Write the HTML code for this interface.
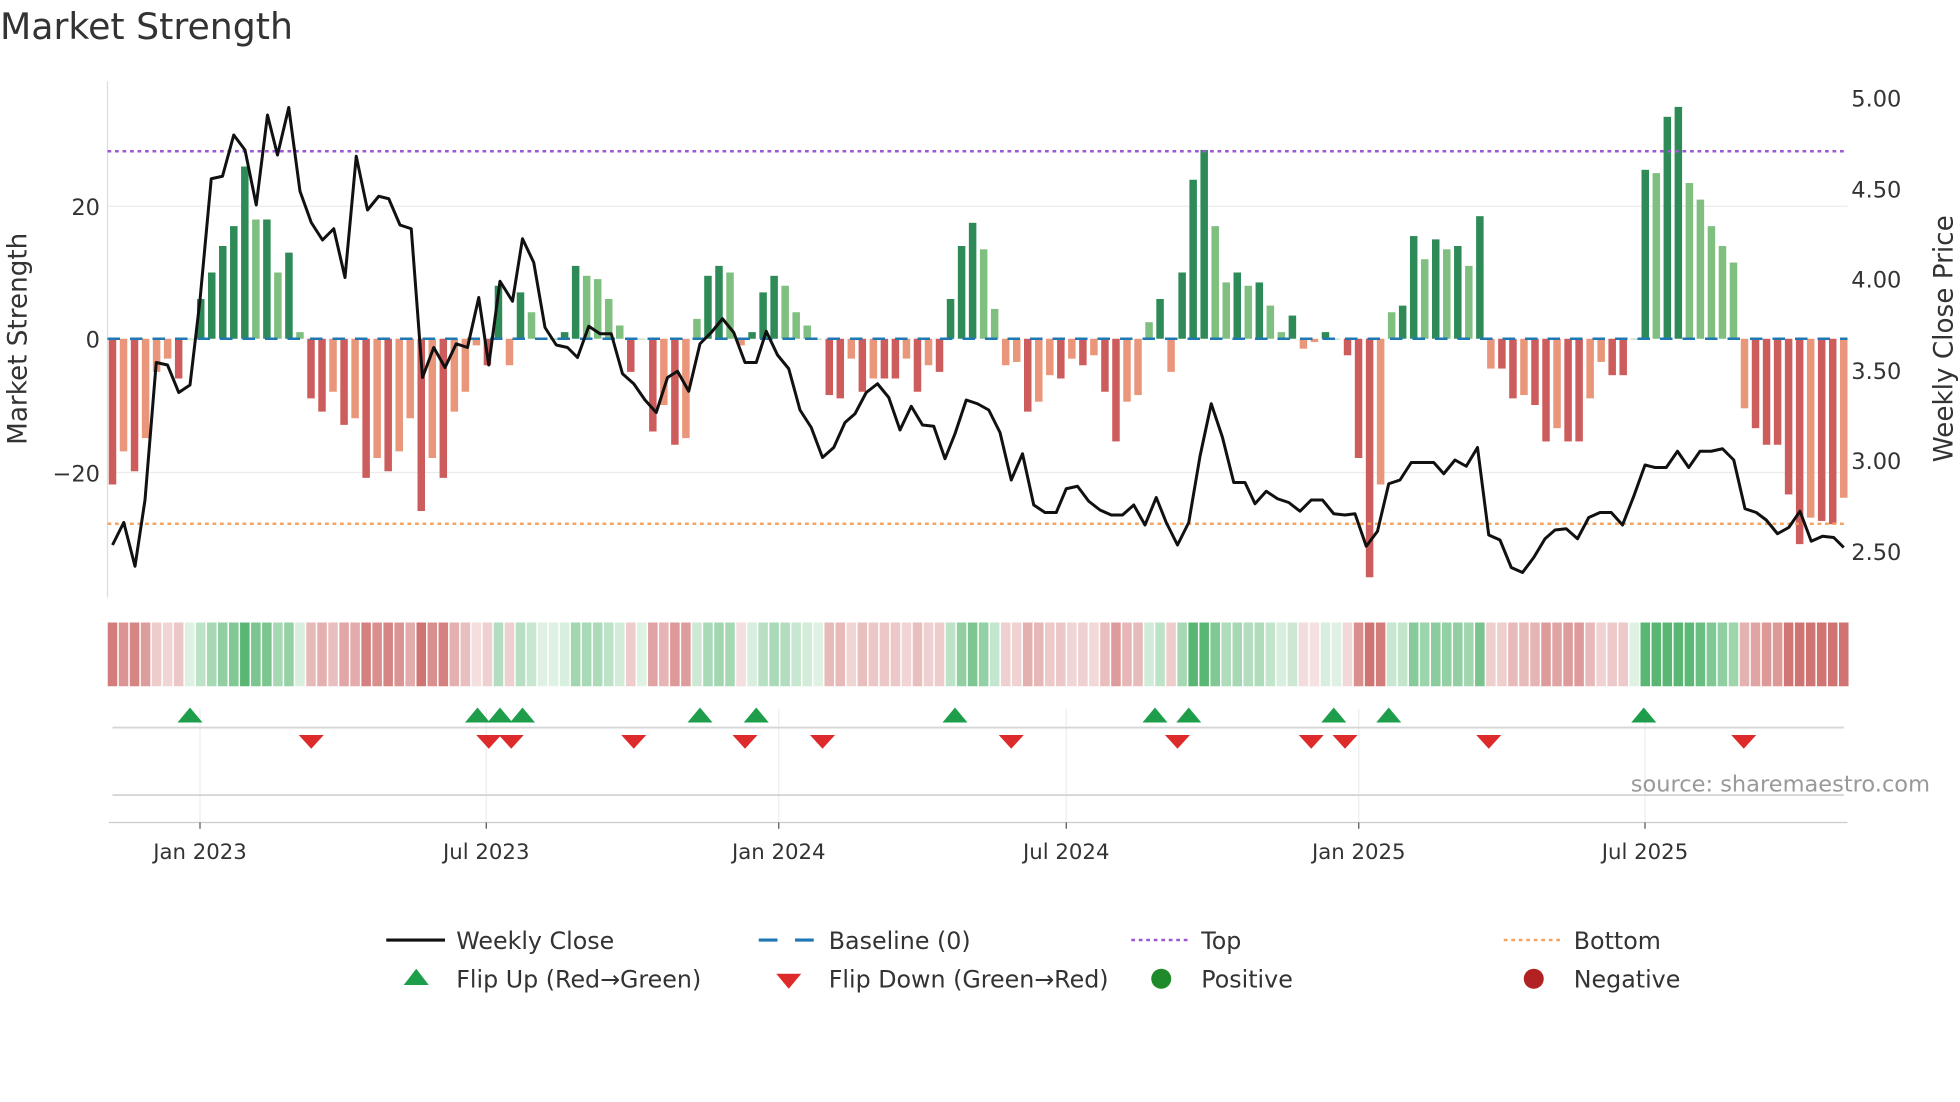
<!DOCTYPE html>
<html><head><meta charset="utf-8">
<style>
html,body{margin:0;padding:0;background:#fff;}
svg{display:block;font-family:"DejaVu Sans","Liberation Sans",sans-serif;}
</style></head>
<body>
<svg id="c" width="1960" height="1102" viewBox="0 0 1568 881.6" xmlns="http://www.w3.org/2000/svg">
<rect width="1568" height="882" fill="#fff"/>
<text x="0" y="31" font-size="29" fill="#333">Market Strength</text>
<g stroke="#ececec" stroke-width="1">
<line x1="86" y1="165" x2="1478" y2="165"/>
<line x1="86" y1="378" x2="1478" y2="378"/>
</g>
<line x1="86" y1="65" x2="86" y2="478" stroke="#ddd"/>
<g id="bars"></g>
<line x1="86" y1="271" x2="1478" y2="271" stroke="#1f77b4" stroke-width="2" stroke-dasharray="10,8"/>
<line x1="86" y1="121" x2="1478" y2="121" stroke="#9b59d6" stroke-width="2" stroke-dasharray="3,3"/>
<line x1="86" y1="419" x2="1478" y2="419" stroke="#f4a460" stroke-width="2" stroke-dasharray="3,3"/>
<polyline id="price" fill="none" stroke="#111" stroke-width="2.4" stroke-linejoin="round"/>
<g font-size="18" fill="#333" text-anchor="end">
<text x="80" y="172">20</text><text x="80" y="278">0</text><text x="80" y="385">−20</text>
</g>
<text transform="translate(21,271) rotate(-90)" font-size="21" fill="#333" text-anchor="middle">Market Strength</text>
<g font-size="18" fill="#333">
<text x="1481" y="85">5.00</text><text x="1481" y="158">4.50</text><text x="1481" y="230">4.00</text>
<text x="1481" y="303">3.50</text><text x="1481" y="375">3.00</text><text x="1481" y="448">2.50</text>
</g>
<text transform="translate(1562,271) rotate(-90)" font-size="21" fill="#333" text-anchor="middle">Weekly Close Price</text>
<g id="heat"></g>
<g stroke="#eee"><line x1="160" y1="567" x2="160" y2="658"/><line x1="389" y1="567" x2="389" y2="658"/><line x1="623" y1="567" x2="623" y2="658"/><line x1="853" y1="567" x2="853" y2="658"/><line x1="1087" y1="567" x2="1087" y2="658"/><line x1="1316" y1="567" x2="1316" y2="658"/></g>
<line x1="90" y1="582" x2="1475" y2="582" stroke="#d6d6d6" stroke-width="1.5"/>
<line x1="90" y1="636" x2="1475" y2="636" stroke="#d6d6d6" stroke-width="1.5"/>
<line x1="87" y1="658" x2="1478" y2="658" stroke="#ccc"/>
<g id="marks"></g>
<text x="1544" y="633" font-size="18" fill="#999" text-anchor="end">source: sharemaestro.com</text>
<g stroke="#555"><line x1="160" y1="658" x2="160" y2="663"/><line x1="389" y1="658" x2="389" y2="663"/><line x1="623" y1="658" x2="623" y2="663"/><line x1="853" y1="658" x2="853" y2="663"/><line x1="1087" y1="658" x2="1087" y2="663"/><line x1="1316" y1="658" x2="1316" y2="663"/></g>
<g font-size="17" fill="#333" text-anchor="middle">
<text x="160" y="687">Jan 2023</text><text x="389" y="687">Jul 2023</text><text x="623" y="687">Jan 2024</text>
<text x="853" y="687">Jul 2024</text><text x="1087" y="687">Jan 2025</text><text x="1316" y="687">Jul 2025</text>
</g>
<g font-size="19" fill="#333">
<line x1="309" y1="752" x2="356" y2="752" stroke="#111" stroke-width="2.5"/>
<text x="365" y="759">Weekly Close</text>
<line x1="607" y1="752" x2="622" y2="752" stroke="#1f77b4" stroke-width="2.5"/>
<line x1="636" y1="752" x2="651" y2="752" stroke="#1f77b4" stroke-width="2.5"/>
<text x="663" y="759">Baseline (0)</text>
<line x1="905" y1="752" x2="950" y2="752" stroke="#9b59d6" stroke-width="2" stroke-dasharray="3,3"/>
<text x="961" y="759">Top</text>
<line x1="1203" y1="752" x2="1248" y2="752" stroke="#f4a460" stroke-width="2" stroke-dasharray="3,3"/>
<text x="1259" y="759">Bottom</text>
<polygon points="323,788 333,775 343,788" fill="#1e9e4a"/>
<text x="365" y="790">Flip Up (Red→Green)</text>
<polygon points="621,779 641,779 631,791" fill="#dd2a2a"/>
<text x="663" y="790">Flip Down (Green→Red)</text>
<circle cx="929" cy="783" r="8" fill="#1f8a2a"/>
<text x="961" y="790">Positive</text>
<circle cx="1227" cy="783" r="8" fill="#b22222"/>
<text x="1259" y="790">Negative</text>
</g>
</svg>
<script>
var NS="http://www.w3.org/2000/svg";
function el(t,a,p){var e=document.createElementNS(NS,t);for(var k in a)e.setAttribute(k,a[k]);p.appendChild(e);return e;}
var v=[-22,-17,-20,-15,-5,-3,-6,0,6,10,14,17,26,18,18,10,13,1,-9,-11,-8,-13,-12,-21,-18,-20,-17,-12,-26,-18,-21,-11,-8,-1,-4,8,-4,7,4,0,0,1,11,9.5,9,6,2,-5,0,-14,-10,-16,-15,3,9.5,11,10,-1,1,7,9.5,8,4,2,0,-8.5,-9,-3,-8,-6,-6,-6,-3,-8,-4,-5,6,14,17.5,13.5,4.5,-4,-3.5,-11,-9.5,-5.5,-6,-3,-4,-2.5,-8,-15.5,-9.5,-8.5,2.5,6,-5,10,24,28.5,17,8.5,10,8,8.5,5,1,3.5,-1.5,-0.5,1,0,-2.5,-18,-36,-22,4,5,15.5,12,15,13.5,14,11,18.5,-4.5,-4.5,-9,-8.5,-10,-15.5,-13.5,-15.5,-15.5,-9,-3.5,-5.5,-5.5,0,25.5,25,33.5,35,23.5,21,17,14,11.5,-10.5,-13.5,-16,-16,-23.5,-31,-27,-27.5,-28,-24];
var n=v.length,x0=90,x1=1475,st=(x1-x0)/(n-1),bw=st*0.68;
var bars=document.getElementById('bars'),heat=document.getElementById('heat');
for(var i=0;i<n;i++){
 var x=x0+i*st,val=v[i],prev=i?v[i-1]:0;
 var dark=Math.abs(val)>=Math.abs(prev);
 var col=val>=0?(dark?"#2e8b57":"#7fbf7f"):(dark?"#cd5c5c":"#e9967a");
 var y=271-val*5.3;
 el('rect',{x:x-bw/2,y:Math.min(y,271),width:bw,height:Math.max(Math.abs(271-y),0.5),fill:col},bars);
 var a=Math.min(1,0.2+Math.abs(val)/30);
 var hc=val>=0?"rgba(60,170,90,"+(a*0.85)+")":"rgba(200,90,90,"+(a*0.85)+")";
 el('rect',{x:x-st/2+0.6,y:498,width:st-1.2,height:51,fill:hc},heat);
}
var p=[[90,436],[99,418],[108,453],[116,400],[125,290],[134,292],[143,314],[152,308],[160,240],[169,143],[178,141],[187,108],[196,120],[205,164],[214,92],[222,124],[231,86],[240,153],[249,178],[258,192],[267,183],[276,222],[285,125],[294,168],[303,157],[311,159],[320,180],[329,183],[338,302],[347,278],[356,294],[365,275],[374,278],[383,238],[391,292],[400,225],[410,241],[418,191],[427,210],[436,262],[445,276],[454,278],[462,286],[471,261],[480,267],[489,267],[498,299],[507,307],[516,320],[525,330],[534,302],[542,297],[551,313],[560,275],[569,266],[578,255],[587,266],[596,290],[605,290],[613,265],[622,284],[631,295],[640,328],[649,342],[658,366],[667,358],[676,338],[684,331],[693,314],[702,307],[711,318],[720,344],[729,325],[738,340],[747,341],[756,367],[764,347],[773,320],[782,323],[791,328],[800,346],[809,384],[818,363],[827,404],[836,410],[845,410],[853,391],[862,389],[871,401],[880,408],[889,412],[898,412],[907,404],[916,420],[925,398],[933,418],[942,436],[951,418],[960,365],[969,323],[978,350],[987,386],[996,386],[1004,403],[1013,393],[1022,399],[1031,402],[1040,409],[1049,400],[1058,400],[1067,411],[1076,412],[1084,411],[1093,437],[1102,425],[1111,387],[1120,384],[1129,370],[1138,370],[1147,370],[1155,379],[1164,368],[1173,373],[1182,358],[1191,428],[1200,432],[1209,454],[1218,458],[1227,446],[1236,431],[1244,424],[1253,423],[1262,431],[1271,414],[1280,410],[1289,410],[1298,420],[1307,397],[1316,372],[1324,374],[1333,374],[1342,361],[1351,374],[1360,361],[1369,361],[1378,359],[1387,368],[1396,407],[1405,410],[1413,416],[1422,427],[1431,422],[1440,409],[1449,433],[1458,429],[1467,430],[1475,438]];
document.getElementById('price').setAttribute('points',p.map(function(q){return q.join(',')}).join(' '));
var m=document.getElementById('marks');
[152,382,400,418,560,605,764,924,951,1067,1111,1315].forEach(function(x){el('polygon',{points:(x-10)+',578 '+x+',566 '+(x+10)+',578',fill:"#1e9e4a"},m);});
[249,391,409,507,596,658,809,942,1049,1076,1191,1395].forEach(function(x){el('polygon',{points:(x-10)+',588 '+(x+10)+',588 '+x+',599',fill:"#dd2a2a"},m);});
</script>
</body></html>
